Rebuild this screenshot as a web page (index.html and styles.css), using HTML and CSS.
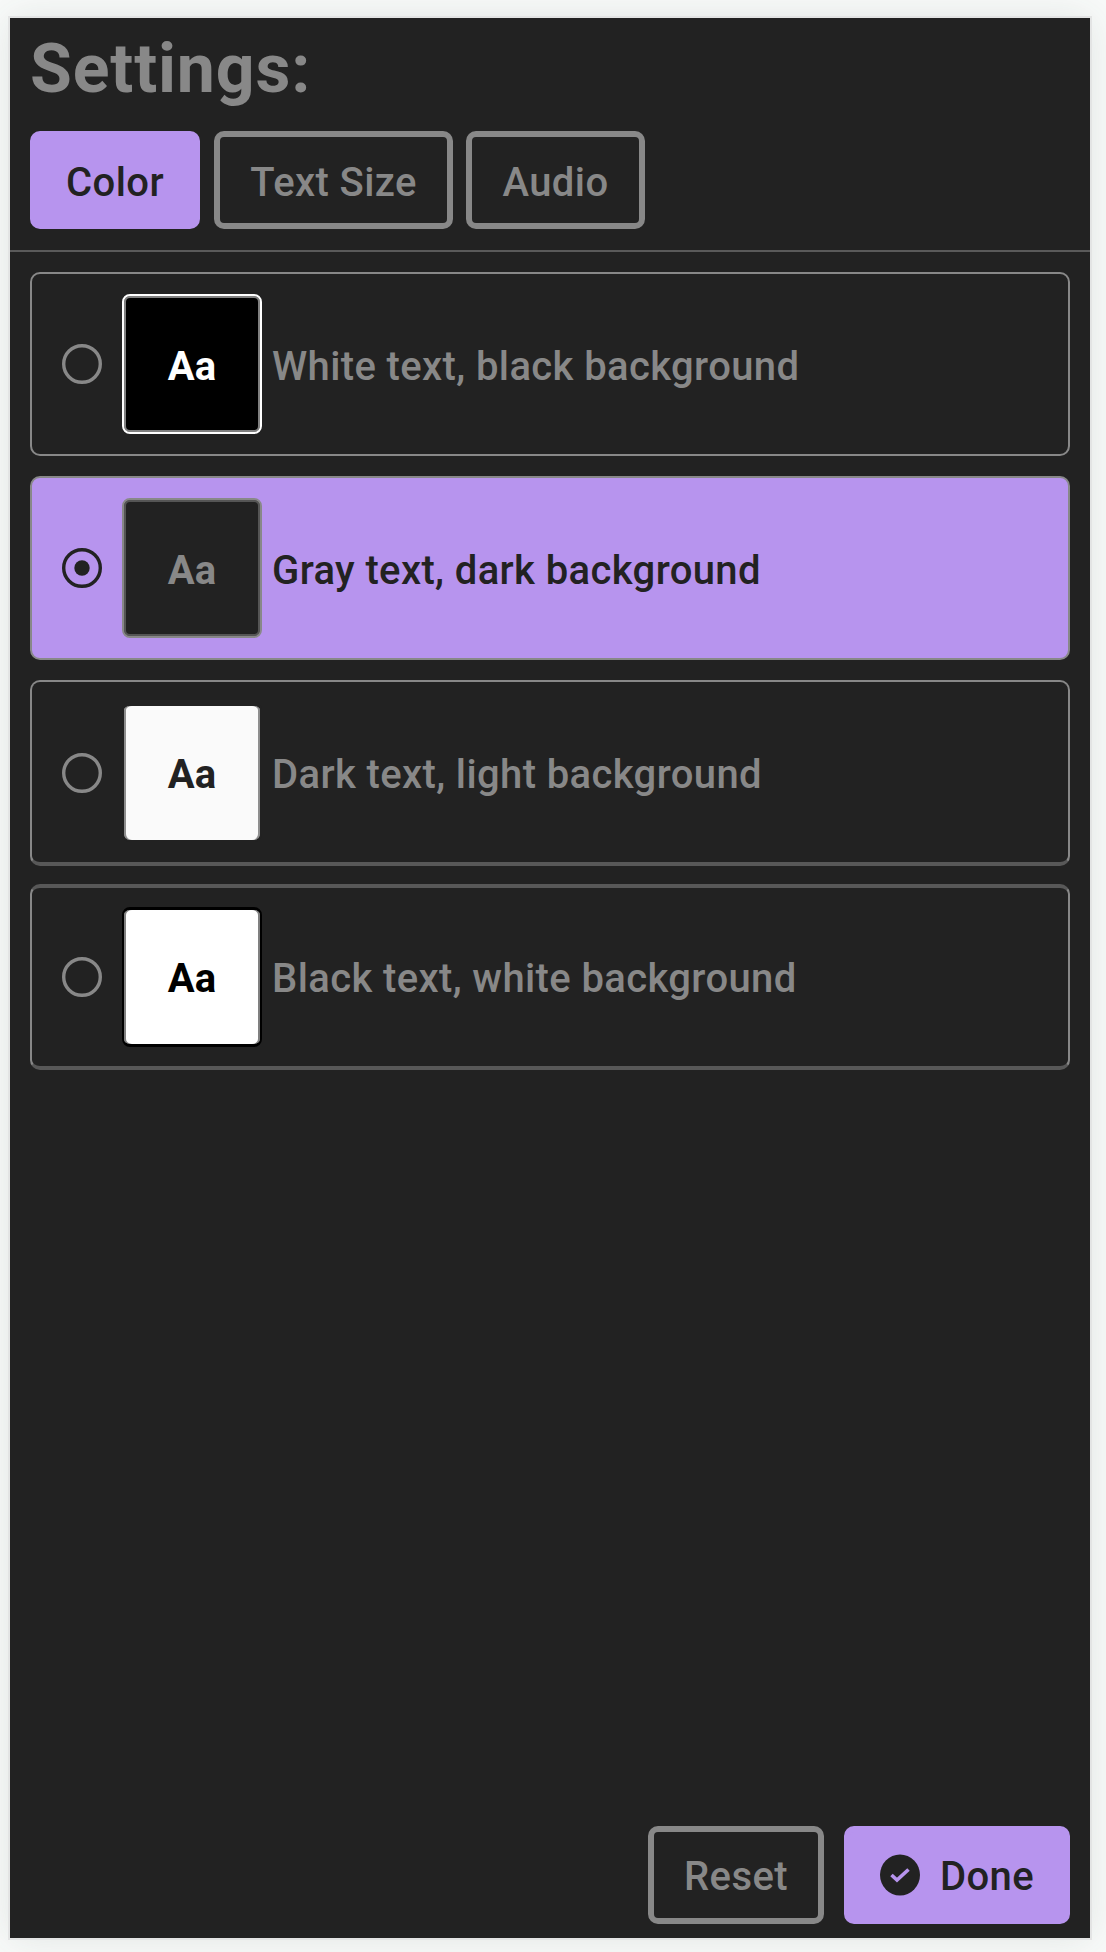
FILE: index.html
```html
<!DOCTYPE html>
<html lang="en">
<head>
<meta charset="utf-8">
<title>Settings</title>
<link rel="stylesheet" href="styles.css">
</head>
<body>
<main class="panel">
  <header class="header">
    <h1 class="title">Settings:</h1>
    <nav class="tabs">
      <button class="btn tab tab-color btn-filled">Color</button>
      <button class="btn tab tab-size">Text Size</button>
      <button class="btn tab tab-audio">Audio</button>
    </nav>
  </header>
  <section class="options">
    <label class="option">
      <svg class="radio" viewBox="0 0 40 40"><circle cx="20" cy="20" r="18.3"/></svg>
      <span class="swatch swatch-black">Aa</span>
      <span class="name">White text, black background</span>
    </label>
    <label class="option option-selected">
      <svg class="radio" viewBox="0 0 40 40"><circle cx="20" cy="20" r="18.3"/><circle class="dot" cx="20" cy="20" r="7.7"/></svg>
      <span class="swatch swatch-dark">Aa</span>
      <span class="name">Gray text, dark background</span>
    </label>
    <label class="option option-third">
      <svg class="radio" viewBox="0 0 40 40"><circle cx="20" cy="20" r="18.3"/></svg>
      <span class="swatch swatch-light">Aa</span>
      <span class="name">Dark text, light background</span>
    </label>
    <label class="option option-fourth">
      <svg class="radio" viewBox="0 0 40 40"><circle cx="20" cy="20" r="18.3"/></svg>
      <span class="swatch swatch-white">Aa</span>
      <span class="name">Black text, white background</span>
    </label>
  </section>
  <footer class="footer">
    <button class="btn reset">Reset</button>
    <button class="btn done btn-filled">
      <svg class="check" viewBox="0 0 40 42"><ellipse cx="20" cy="21" rx="20" ry="20.5"/><path d="M11.5 21L17 26L28.5 15.5"/></svg>
      <span>Done</span>
    </button>
  </footer>
</main>
</body>
</html>
```
FILE: styles.css
```css
* { box-sizing: border-box; }
body {
  margin: 0;
  height: 1952px;
  padding: 18px 16px 14px 10px;
  background: #f8faf9;
  overflow: hidden;
  font-family: Roboto, "Liberation Sans", sans-serif;
  color: #888;
}
.panel {
  display: flex;
  flex-direction: column;
  height: 1920px;
  background: #222;
  box-shadow: 0 0 0 2px #e3e4e4, 0 0 36px rgba(60, 70, 65, .12);
}
.header {
  height: 234px;
  padding: 11px 20px 0;
  border-bottom: 2px solid #5a5a5a;
}
.title {
  margin: 0;
  height: 102px;
  font-size: 68px;
  line-height: 80px;
  font-weight: 700;
  letter-spacing: .85px;
}
.tabs { display: flex; gap: 13px; }
.btn {
  display: flex;
  align-items: center;
  justify-content: center;
  height: 98px;
  padding: 4px 0 0;
  border: 6px solid #888;
  border-radius: 10px;
  background: transparent;
  color: #888;
  font: 500 40px/48px Roboto, "Liberation Sans", sans-serif;
  letter-spacing: .4px;
  white-space: nowrap;
}
.tab { padding-top: 6px; }
.btn-filled {
  border-color: #b794ee;
  background: #b794ee;
  color: #222;
}
.tab-color { width: 170px; margin-right: 1px; }
.tab-size { width: 239px; }
.tab-audio { width: 179px; }
.options {
  display: flex;
  flex-direction: column;
  padding: 20px 20px 0;
}
.option {
  display: flex;
  align-items: center;
  height: 184px;
  margin-bottom: 20px;
  padding-left: 30px;
  border: 2px solid #888;
  border-radius: 10px;
}
.option-selected { background: #b794ee; color: #222; }
.option-third { height: 186px; margin-bottom: 18px; border-bottom: 4px solid #585858; }
.option-fourth { height: 186px; border-top: 4px solid #585858; border-bottom: 4px solid #585858; }
.radio {
  width: 40px;
  height: 40px;
  margin-right: 20px;
  fill: none;
  stroke: currentColor;
  stroke-width: 3.4;
}
.option-third .radio { margin-top: 2px; }
.dot { fill: currentColor; stroke: none; }
.swatch {
  display: flex;
  align-items: center;
  justify-content: center;
  width: 140px;
  height: 140px;
  margin-right: 10px;
  padding-top: 4px;
  border: 2px solid;
  border-radius: 8px;
  font-size: 40px;
  font-weight: 700;
}
.swatch-black { background: #000; color: #fff; box-shadow: inset 0 0 0 2px #808080; }
.swatch-dark { background: #222; color: #888; box-shadow: inset 0 0 0 2px #555; }
.swatch-light {
  padding-top: 2px;
  border-top-width: 4px;
  background: #fafafa;
  color: #222;
  box-shadow: inset 2px 0 #8e8e8e, inset -2px 0 #8e8e8e;
}
.swatch-white {
  padding-top: 2px;
  border-width: 3px 2px;
  background: #fff;
  color: #000;
  box-shadow: inset 2px 0 #808080, inset -2px 0 #808080;
}
.name {
  padding-top: 5px;
  font-size: 40px;
  line-height: 48px;
  font-weight: 500;
  letter-spacing: .38px;
  white-space: nowrap;
}
.option-fourth .name { padding-top: 3px; }
.footer {
  display: flex;
  justify-content: flex-end;
  gap: 20px;
  margin-top: auto;
  padding: 0 20px 14px;
}
.reset { width: 176px; }
.done { width: 226px; gap: 20px; }
.check { width: 40px; height: 42px; margin-top: -4px; fill: #222; }
.check path { fill: none; stroke: #b794ee; stroke-width: 3.6; }
```
